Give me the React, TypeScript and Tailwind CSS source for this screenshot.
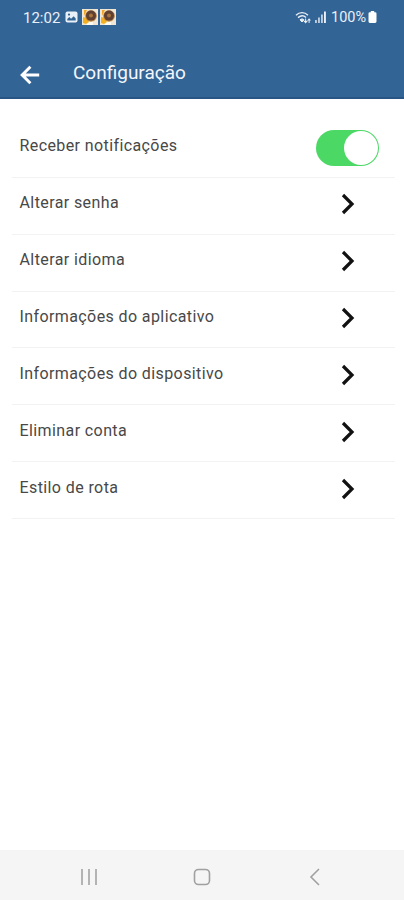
import React, { useState } from 'react'
import clsx from 'clsx'

const items = [
   'Alterar senha',
   'Alterar idioma',
   'Informações do aplicativo',
   'Informações do dispositivo',
   'Eliminar conta',
   'Estilo de rota',
]

const FlowerIcon = () => (
   <svg width="16" height="16" viewBox="0 0 16 16">
      <rect width="16" height="16" fill="#efe6d6" />
      <path d="M0 8l6 2 5 2v4H5z" fill="#fdfaf2" />
      <path d="M1 8l4 1 2 4-3 2-3-1z" fill="#f5b01f" />
      <path d="M2 1l3 0-3 6z" fill="#f2a62b" />
      <circle cx="9" cy="7" r="5.8" fill="#b9813f" />
      <circle cx="9" cy="6.6" r="5" fill="#5f4033" />
      <circle cx="9" cy="6.6" r="2" fill="#a8743c" />
   </svg>
)

const StatusBar = () => (
   <div className="flex h-[34px] items-center justify-between pl-[23px] pr-[27px] text-[#e9f0f7]">
      <div className="flex items-center">
         <span className="w-[42px] pt-[2px] text-[15px] leading-none">12:02</span>
         <svg width="13" height="12" viewBox="0 0 13 12" className="mr-[4px]">
            <rect x="0.5" y="0.5" width="12" height="11" rx="2" fill="currentColor" />
            <path d="M2.3 9.6V8l2-2 1.8 1.7 2.6-2.4 2 2.1v2.2z" fill="#336496" />
            <circle cx="4" cy="3.6" r="1.1" fill="#336496" />
         </svg>
         <div className="flex gap-[2px]">
            <FlowerIcon />
            <FlowerIcon />
         </div>
      </div>
      <div className="flex items-center">
         <svg width="17" height="13" viewBox="0 0 17 13" fill="none" stroke="currentColor" className="mr-[3px]">
            <path d="M1 4.2C4.5 0.8 9.5 0.8 13 4.2" strokeWidth="1.4" />
            <path d="M3 6.6C5.6 4.4 8.8 4.4 11 6.4" strokeWidth="1.4" />
            <path d="M5 8.8c1.4-1.2 2.8-1.2 4 0L7 11z" strokeWidth="1" fill="currentColor" />
            <path d="M8.2 9.8l2.4 2.7L13 9.8zM12.2 9.6l1.9-2.3L16 9.6z" stroke="none" fill="currentColor" />
            <path d="M10.6 7.5V10M14.1 9v3" strokeWidth="1" />
         </svg>
         <svg width="11" height="12" viewBox="0 0 11 12" fill="currentColor" className="mr-[5px]">
            <rect x="0" y="9" width="1.9" height="3" opacity="0.75" />
            <rect x="3" y="6.5" width="1.9" height="5.5" opacity="0.75" />
            <rect x="6" y="3.5" width="1.9" height="8.5" opacity="0.75" />
            <rect x="9" y="0.5" width="1.9" height="11.5" />
         </svg>
         <span className="w-[37px] whitespace-nowrap pt-[2px] text-[14.5px] leading-none">100%</span>
         <svg width="9" height="12" viewBox="0 0 9 12" fill="#ffffff">
            <path d="M2.8 0h3.4v1.3h1a1.3 1.3 0 0 1 1.3 1.3v8A1.4 1.4 0 0 1 7.1 12H1.9A1.4 1.4 0 0 1 .5 10.6v-8a1.3 1.3 0 0 1 1.3-1.3h1z" />
         </svg>
      </div>
   </div>
)

const Header = () => (
   <div className="flex h-[64px] items-center pl-[20px] pt-[14px]">
      <button type="button" aria-label="Voltar" className="mt-[3px] w-[53px]">
         <svg width="20" height="20" viewBox="0 0 20 20" fill="none" stroke="#ffffff" strokeWidth="3">
            <path d="M19.2 10H3M10.4 1.8L2.2 10l8.2 8.2" />
         </svg>
      </button>
      <h1 className="pb-[2px] text-[19px] leading-none text-[#f2f6fa]">Configuração</h1>
   </div>
)

const App = () => {
   const [enabled, setEnabled] = useState(true)

   return (
      <div className="flex h-[900px] w-[404px] flex-col bg-white font-['Roboto',sans-serif]">
         <div className="h-[99px] border-b-2 border-[#285583] bg-[#336496]">
            <StatusBar />
            <Header />
         </div>

         <div className="flex-1 pl-[12px] pr-[9px] text-[16px] tracking-[0.4px] text-[#484848]">
            <div className="flex h-[78.8px] items-center justify-between border-b border-[#f2f2f2] pl-[7.5px] pr-[16px] pt-[20px]">
               <span className="pb-[4px]">Receber notificações</span>
               <button
                  type="button"
                  role="switch"
                  aria-checked={enabled}
                  aria-label="Receber notificações"
                  onClick={() => setEnabled(!enabled)}
                  className={clsx(
                     'flex h-[36px] w-[63.5px] items-center rounded-full px-px',
                     enabled ? 'justify-end bg-[#4bd864]' : 'justify-start bg-gray-300',
                  )}
               >
                  <span className="size-[34px] rounded-full bg-white" />
               </button>
            </div>

            {items.map((item) => (
               <div
                  key={item}
                  className="flex h-[56.9px] items-center justify-between border-b border-[#f2f2f2] pl-[7.5px] pr-[40.5px]"
               >
                  <span className="pb-[5px]">{item}</span>
                  <svg
                     width="14"
                     height="22"
                     viewBox="0 0 14 22"
                     fill="none"
                     stroke="#111111"
                     strokeWidth="3.2"
                     className="mb-[3px]"
                  >
                     <path d="M2 2l9 9L2 20" />
                  </svg>
               </div>
            ))}
         </div>

         {/* Android navigation */}
         <div className="flex h-[50px] items-center justify-between bg-[#f5f5f5] pl-[80px] pr-[83px] pt-[3px]">
            <svg width="18" height="18" viewBox="0 0 18 18" stroke="#a3a3a3" strokeWidth="1.6">
               <path d="M2 1v16M9 1v16M16 1v16" />
            </svg>
            <svg
               width="18"
               height="18"
               viewBox="0 0 18 18"
               fill="none"
               stroke="#a0a0a0"
               strokeWidth="1.6"
               className="mr-[4px]"
            >
               <rect x="1.5" y="1.5" width="15" height="15" rx="4" />
            </svg>
            <svg width="12" height="18" viewBox="0 0 12 18" fill="none" stroke="#a0a0a0" strokeWidth="1.6">
               <path d="M10 1L2 9l8 8" />
            </svg>
         </div>
      </div>
   )
}

export default App
